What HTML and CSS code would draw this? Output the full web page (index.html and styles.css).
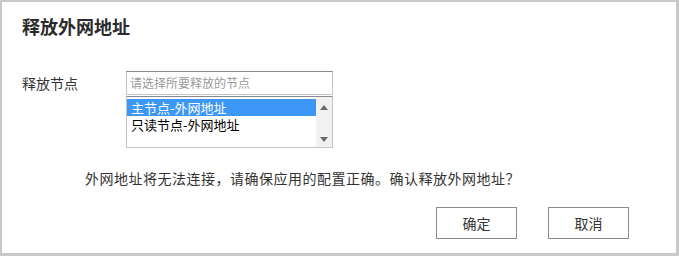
FILE: index.html
```html
<!DOCTYPE html>
<html lang="zh-CN">
<head>
<meta charset="utf-8">
<title>释放外网地址</title>
<link rel="stylesheet" href="styles.css">
</head>
<body>
<div class="dialog">
  <h2 class="title">释放外网地址</h2>
  <div class="field">
    <div class="label">释放节点</div>
    <div class="select">
      <div class="input">请选择所要释放的节点</div>
      <div class="listbox">
        <div class="options">
          <div class="option selected">主节点-外网地址</div>
          <div class="option">只读节点-外网地址</div>
        </div>
        <div class="scrollbar">
          <span class="arrow up"></span>
          <span class="arrow down"></span>
        </div>
      </div>
    </div>
  </div>
  <p class="message">外网地址将无法连接，请确保应用的配置正确。确认释放外网地址？</p>
  <div class="actions">
    <button class="btn">确定</button>
    <button class="btn">取消</button>
  </div>
</div>
</body>
</html>
```
FILE: styles.css
```css
html, body {
  margin: 0;
  padding: 0;
  background: #fff;
}
.dialog {
  box-sizing: border-box;
  width: 679px;
  height: 256px;
  border-style: solid;
  border-color: #c8c8c8;
  border-width: 2px 3px 3px 2px;
  padding: 12px 0 0 20px;
  display: flex;
  flex-direction: column;
  font-family: "Noto Sans CJK SC", "Noto Sans", sans-serif;
  color: #333;
}
.title {
  margin: 0;
  font-size: 18px;
  line-height: 24px;
  font-weight: bold;
  color: #2b2b2b;
}
.field {
  margin-top: 33px;
  display: flex;
}
.label {
  width: 104px;
  font-size: 14px;
  line-height: 24px;
  color: #333;
}
.select {
  display: flex;
  flex-direction: column;
  gap: 1px;
  width: 207px;
}
.input {
  box-sizing: border-box;
  height: 24px;
  border: 1px solid #c4c4c4;
  border-top-color: #8a8a8a;
  padding-left: 3px;
  font-size: 12px;
  line-height: 22px;
  color: #999;
}
.listbox {
  box-sizing: border-box;
  height: 52px;
  border: 1px solid #c4c4c4;
  border-top-color: #8a8a8a;
  display: flex;
}
.options {
  flex: 1;
  padding-top: 2px;
}
.option {
  height: 17px;
  font-size: 13px;
  line-height: 17px;
  padding-left: 4px;
  color: #000;
}
.option.selected {
  background: #3d97f7;
  color: #fff;
}
.scrollbar {
  width: 16px;
  background: #f1f1f1;
  display: flex;
  flex-direction: column;
  justify-content: space-between;
  align-items: center;
  padding: 8px 0 5px;
}
.arrow {
  width: 0;
  height: 0;
  border-left: 4px solid transparent;
  border-right: 4px solid transparent;
}
.arrow.up {
  border-bottom: 5px solid #6a6a6a;
}
.arrow.down {
  border-top: 5px solid #6a6a6a;
}
.message {
  margin: 20px 0 0;
  padding-left: 63px;
  font-size: 14px;
  line-height: 20px;
  letter-spacing: 0.5px;
  color: #333;
}
.actions {
  margin-top: 19px;
  margin-right: 47px;
  display: flex;
  justify-content: flex-end;
  gap: 31px;
}
.btn {
  box-sizing: border-box;
  width: 81px;
  height: 32px;
  border: 1px solid #8c8c8c;
  background: #fff;
  font-family: "Noto Sans CJK SC", "Noto Sans", sans-serif;
  font-size: 14px;
  color: #333;
  padding: 0;
  border-radius: 0;
}
```
